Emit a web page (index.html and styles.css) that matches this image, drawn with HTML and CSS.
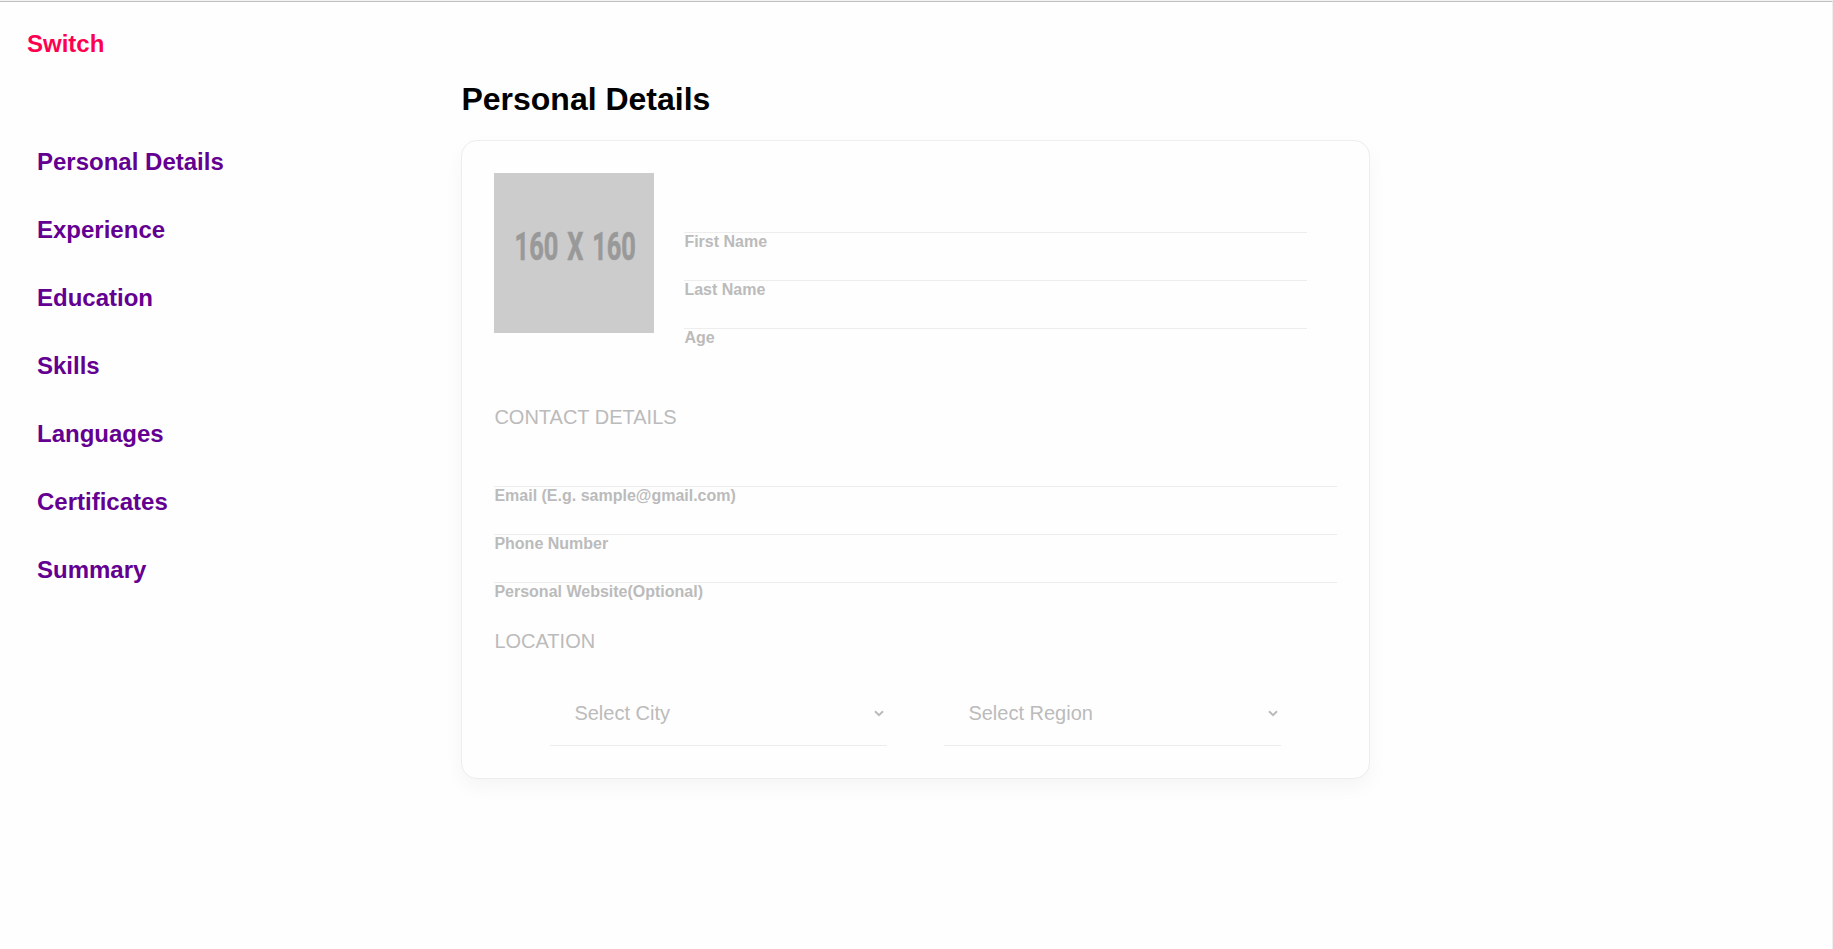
FILE: index.html
```html
<!DOCTYPE html>
<html lang="en">
<head>
<meta charset="utf-8">
<title>Personal Details</title>
<link rel="stylesheet" href="styles.css">
</head>
<body>
<div class="page">
  <aside class="sidebar">
    <a class="switch">Switch</a>
    <nav class="nav">
      <a>Personal Details</a>
      <a>Experience</a>
      <a>Education</a>
      <a>Skills</a>
      <a>Languages</a>
      <a>Certificates</a>
      <a>Summary</a>
    </nav>
  </aside>
  <main class="main">
    <h1 class="title">Personal Details</h1>
    <section class="card">
      <div class="profile">
        <div class="avatar"><span class="avatar-text">160 X 160</span></div>
        <div class="fields names">
          <label class="field">First Name</label>
          <label class="field">Last Name</label>
          <label class="field">Age</label>
        </div>
      </div>
      <h2 class="subtitle">CONTACT DETAILS</h2>
      <div class="fields contact">
        <label class="field">Email (E.g. sample@gmail.com)</label>
        <label class="field">Phone Number</label>
        <label class="field">Personal Website(Optional)</label>
      </div>
      <h2 class="subtitle location">LOCATION</h2>
      <div class="selects">
        <div class="select"><span>Select City</span><svg class="chevron" width="10" height="7" viewBox="0 0 10 7"><path d="M1 1.2 5 5.2 9 1.2"/></svg></div>
        <div class="select"><span>Select Region</span><svg class="chevron" width="10" height="7" viewBox="0 0 10 7"><path d="M1 1.2 5 5.2 9 1.2"/></svg></div>
      </div>
    </section>
  </main>
</div>
</body>
</html>
```
FILE: styles.css
```css
* { box-sizing: border-box; }
body {
  margin: 0;
  height: 949px;
  overflow: hidden;
  background: #fefefe;
  border-top: 1px solid #f2f2f2;
  font-family: "Liberation Sans", Arial, sans-serif;
}
.page {
  display: flex;
  height: 948px;
  border-top: 1px solid #c0c0c0;
  border-right: 1px solid #eee;
}
.sidebar {
  flex: none;
  width: 461.4px;
  padding: 28px 27px;
  font-size: 24px;
  font-weight: 700;
  line-height: 28px;
}
.switch { display: block; color: #ff0050; }
.nav {
  display: flex;
  flex-direction: column;
  gap: 40px;
  padding: 90px 10px 0;
  color: #640091;
}
.main { width: 909px; }
.title {
  margin: 0 0 22px;
  padding-top: 79px;
  font-size: 32px;
  line-height: 37px;
}
.card {
  height: 639px;
  padding: 32px;
  border: 1px solid #ededed;
  border-radius: 16px;
  background: #fefefe;
  box-shadow: 0 8px 20px rgba(0, 0, 0, .04);
  color: #bbb;
}
.profile { display: flex; gap: 30px; }
.avatar {
  display: flex;
  flex: none;
  justify-content: center;
  width: 160px;
  height: 160px;
  padding: 51px 0 0 1px;
  background: #ccc;
}
.avatar-text {
  height: 46px;
  color: #999;
  font: 700 39px/46px Roboto, sans-serif;
  -webkit-text-stroke: .6px #999;
  white-space: nowrap;
  word-spacing: 4px;
  transform: scaleX(.65);
}
.fields { display: flex; flex-direction: column; }
.names { width: 623px; padding-top: 59px; }
.field {
  height: 48px;
  border-top: 1px solid #ededed;
  font-size: 16px;
  font-weight: 700;
  line-height: 18px;
}
.subtitle {
  margin: 29px 0 0;
  font-size: 20px;
  font-weight: 400;
  line-height: 24px;
}
.contact { padding-top: 57px; }
.location { margin-top: -1px; }
.selects {
  display: flex;
  gap: 57px;
  padding: 29px 56px 0;
}
.select {
  display: flex;
  justify-content: space-between;
  align-items: center;
  width: 337px;
  height: 64px;
  padding: 0 3px 0 24px;
  border-bottom: 1px solid #ededed;
  font-size: 20px;
}
.chevron { fill: none; stroke: #bbb; stroke-width: 2; }
```
